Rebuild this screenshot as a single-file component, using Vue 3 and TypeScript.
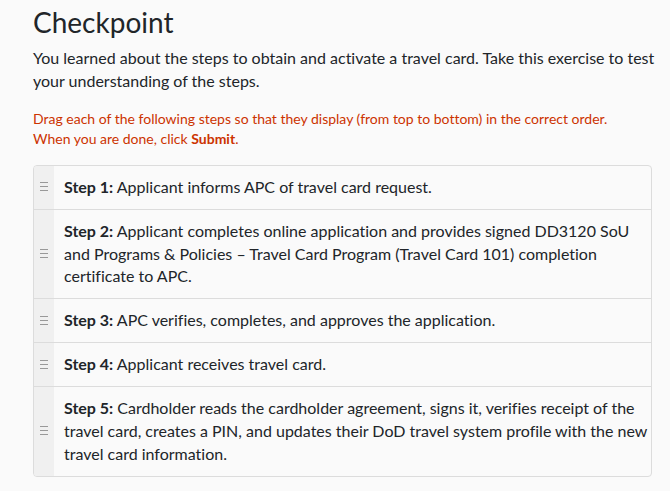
<script setup lang="ts">
interface Step {
  label: string
  text: string
}

const steps: Step[] = [
  { label: 'Step 1:', text: 'Applicant informs APC of travel card request.' },
  {
    label: 'Step 2:',
    text: 'Applicant completes online application and provides signed DD3120 SoU and Programs & Policies – Travel Card Program (Travel Card 101) completion certificate to APC.',
  },
  { label: 'Step 3:', text: 'APC verifies, completes, and approves the application.' },
  { label: 'Step 4:', text: 'Applicant receives travel card.' },
  {
    label: 'Step 5:',
    text: 'Cardholder reads the cardholder agreement, signs it, verifies receipt of the travel card, creates a PIN, and updates their DoD travel system profile with the new travel card information.',
  },
]
</script>

<template>
  <main class="checkpoint">
    <h1>Checkpoint</h1>
    <p class="intro">
      You learned about the steps to obtain and activate a travel card. Take this exercise to test
      your understanding of the steps.
    </p>
    <p class="instructions">
      Drag each of the following steps so that they display (from top to bottom) in the correct
      order.<br />When you are done, click <strong>Submit</strong>.
    </p>
    <ol class="steps">
      <li v-for="step in steps" :key="step.label" class="step" draggable="true">
        <span class="handle">
          <svg width="10" height="10" viewBox="0 0 10 10" aria-hidden="true">
            <path d="M1 0.5h8M1 4.5h8M1 8.5h8" />
          </svg>
        </span>
        <p class="text"><strong>{{ step.label }}</strong> {{ step.text }}</p>
      </li>
    </ol>
  </main>
</template>

<style>
body {
  background: #fafafa;
}
</style>

<style scoped>
.checkpoint {
  padding: 4px 8px 16px 33px;
  color: #212529;
  font-family: Lato, 'Liberation Sans', sans-serif;
  font-size: 16px;
  font-variant-ligatures: none;
  line-height: 1.43;
}

h1 {
  margin: 0 0 6px;
  font-size: 28px;
  font-weight: 400;
  line-height: 37px;
}

p {
  margin: 0;
}

.intro {
  margin-bottom: 16px;
}

.instructions {
  margin-bottom: 16px;
  color: #cc3300;
  font-size: 14px;
}

.steps {
  margin: 0 10px 0 0;
  padding: 0;
  border: 1px solid #dcdcdc;
  border-radius: 4px;
  list-style: none;
  overflow: hidden;
}

.step {
  display: flex;
}

.step + .step {
  border-top: 1px solid #dcdcdc;
}

.handle {
  display: flex;
  flex: none;
  align-items: center;
  justify-content: center;
  width: 20px;
  background: #f0f0f0;
  cursor: move;
}

.handle path {
  fill: none;
  stroke: #999;
}

.text {
  padding: 10px 2px 10px 10px;
}
</style>
